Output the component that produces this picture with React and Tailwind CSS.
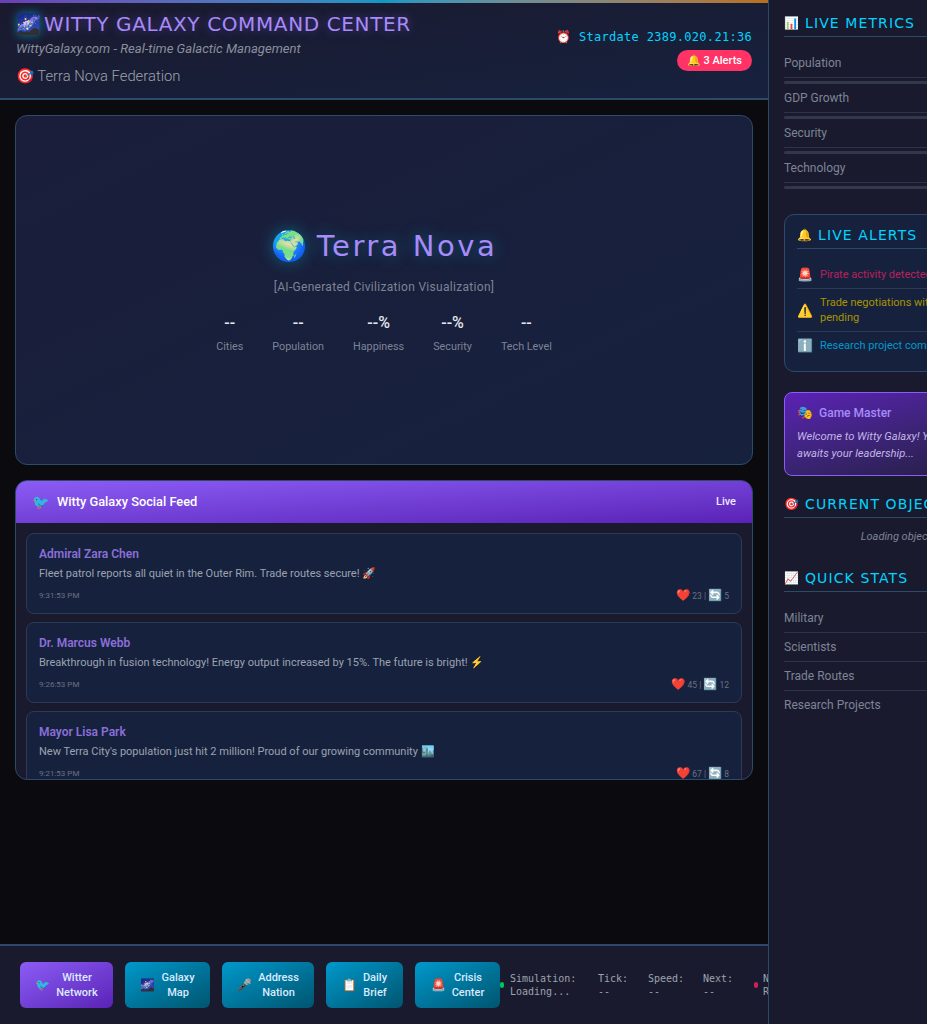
const display = "font-['DejaVu_Sans',sans-serif]";

const metrics = ['Population', 'GDP Growth', 'Security', 'Technology'];
const quickStats = ['Military', 'Scientists', 'Trade Routes', 'Research Projects'];
const heroStats = [
  ['--', 'Cities'],
  ['--', 'Population'],
  ['--%', 'Happiness'],
  ['--%', 'Security'],
  ['--', 'Tech Level'],
];
const posts = [
  { author: 'Admiral Zara Chen', text: 'Fleet patrol reports all quiet in the Outer Rim. Trade routes secure! 🚀', time: '9:31:53 PM', likes: 23, shares: 5 },
  { author: 'Dr. Marcus Webb', text: 'Breakthrough in fusion technology! Energy output increased by 15%. The future is bright! ⚡', time: '9:26:53 PM', likes: 45, shares: 12 },
  { author: 'Mayor Lisa Park', text: "New Terra City's population just hit 2 million! Proud of our growing community 🏙️", time: '9:21:53 PM', likes: 67, shares: 8 },
];
const actions = [
  { icon: '🐦', lines: ['Witter', 'Network'], width: 'w-[93px]', color: 'from-[#8b5cf6] to-[#5b21b6]' },
  { icon: '🌌', lines: ['Galaxy', 'Map'], width: 'w-[85px]', color: 'from-[#0099cc] to-[#005570]' },
  { icon: '🎤', lines: ['Address', 'Nation'], width: 'w-[92px]', color: 'from-[#0099cc] to-[#005570]' },
  { icon: '📋', lines: ['Daily', 'Brief'], width: 'w-[77px]', color: 'from-[#0099cc] to-[#005570]' },
  { icon: '🚨', lines: ['Crisis', 'Center'], width: 'w-[85px]', color: 'from-[#0099cc] to-[#005570]' },
];

function SectionTitle({ icon, children }) {
  return (
    <h3 className="flex h-[25px] items-center gap-[6px] border-b border-[#2d4a6b] pb-[3px] text-[14px] leading-none">
      <span className="text-[12px]">{icon}</span>
      <span className={`${display} tracking-[1.1px] whitespace-nowrap text-[#00d4ff]`}>{children}</span>
    </h3>
  );
}

function Post({ post }) {
  return (
    <div className="h-[81px] shrink-0 rounded-[8px] border border-[#2d3a55] bg-[#16213e] px-[12px] pt-[12px]">
      <div className="text-[12px] leading-[16px] font-semibold text-[#8b6fd8]">{post.author}</div>
      <div className="mt-[4px] text-[11px] leading-[16px] text-[#9ca3af]">{post.text}</div>
      <div className="mt-[7px] flex items-center justify-between text-[8px] leading-[12px] text-[#6b7280]">
        <span>{post.time}</span>
        <span className="text-[8.5px]"><span className="text-[11.5px]">❤️</span> {post.likes} | <span className="text-[11.5px]">🔄</span> {post.shares}</span>
      </div>
    </div>
  );
}

export default function App() {
  return (
    <div className="flex h-screen w-[927px] overflow-hidden bg-[#0a0a0f] font-['Roboto',sans-serif]">
      <div className="flex w-[768px] shrink-0 flex-col">
        <header className="h-[100px] shrink-0 border-b-2 border-[#2d4a6b] bg-gradient-to-br from-[#1a1a2e] to-[#16213e]">
          <div className="h-[3px] bg-gradient-to-r from-[#6b3fb5] via-[#0f97c4] to-[#b8701a]" />
          <div className="flex justify-between px-[16px]">
            <div>
              <h1 className="mt-[9px] flex items-center gap-[3px] text-[20px] leading-[24px]">
                <span className="[text-shadow:0_0_10px_rgba(0,212,255,0.5)]">🌌</span>
                <span className={`${display} tracking-[0.62px] whitespace-nowrap text-[#a78bfa] [text-shadow:0_0_10px_rgba(139,92,246,0.5)]`}>WITTY GALAXY COMMAND CENTER</span>
              </h1>
              <p className="mt-[4px] text-[13.1px] leading-[18px] text-[#8a8f9e] italic">WittyGalaxy.com - Real-time Galactic Management</p>
              <p className="mt-[8px] text-[14.8px] leading-[20px] font-light text-[#9ca3af]">🎯 Terra Nova Federation</p>
            </div>
            <div className="flex flex-col items-end">
              <div className="mt-[25px] font-['DejaVu_Sans_Mono',monospace] text-[12px] leading-[18px] tracking-[0.3px] text-[#00d4ff]">⏰ Stardate 2389.020.21:36</div>
              <div className="mt-[4px] rounded-full bg-[#ff3366] px-[10px] py-[3px] text-[11px] leading-[15px] font-medium text-white">🔔 3 Alerts</div>
            </div>
          </div>
        </header>

        <main className="flex flex-1 flex-col gap-[15px] px-[15px] pt-[15px]">
          <section className="flex h-[350px] shrink-0 flex-col items-center rounded-[12px] border border-[#2d4a6b] bg-gradient-to-br from-[#1a1e3a] to-[#16213e] pt-[112px]">
            <h2 className="flex items-center gap-[10px] text-[29px] leading-[36px] [text-shadow:0_0_16px_rgba(0,212,255,0.35)]">
              <span>🌍</span>
              <span className={`${display} tracking-[2.5px] text-[#a78bfa]`}>Terra Nova</span>
            </h2>
            <p className="mt-[14px] text-[12px] leading-[18px] tracking-[0.3px] text-[#7d8496]">[AI-Generated Civilization Visualization]</p>
            <div className="mt-[17px] flex gap-[29px]">
              {heroStats.map(([value, label]) => (
                <div key={label} className="flex flex-col items-center">
                  <span className="text-[16px] leading-[20px] font-medium text-[#e5e7eb]">{value}</span>
                  <span className="mt-[7px] text-[10.8px] leading-[14px] text-[#7d8496]">{label}</span>
                </div>
              ))}
            </div>
          </section>

          <section className="flex h-[300px] shrink-0 flex-col overflow-hidden rounded-[12px] border border-[#2d4a6b] bg-[#1a1a2e]">
            <div className="flex h-[42px] shrink-0 items-center justify-between bg-gradient-to-br from-[#8b5cf6] to-[#5b21b6] px-[16px]">
              <div className="flex items-center gap-[8px] text-[12.8px] font-medium text-white">
                <span className="text-[14px]">🐦</span>
                <span>Witty Galaxy Social Feed</span>
              </div>
              <span className="text-[11px] font-medium text-[#ede9fe]">Live</span>
            </div>
            <div className="flex flex-col gap-[8px] overflow-hidden px-[10px] pt-[10px]">
              {posts.map((post) => (
                <Post key={post.author} post={post} />
              ))}
            </div>
          </section>
        </main>

        <footer className="flex h-[80px] shrink-0 items-center overflow-hidden border-t-2 border-[#2d4a6b] bg-[#1a1a2e] pl-[20px]">
          <div className="flex shrink-0 gap-[12px]">
            {actions.map((action) => (
              <div key={action.icon} className={`flex h-[46px] shrink-0 items-center justify-center gap-[6px] rounded-[6px] bg-gradient-to-br ${action.width} ${action.color}`}>
                <span className="text-[12px]">{action.icon}</span>
                <span className="text-center text-[11px] leading-[15px] font-medium text-[#dbeafe]">
                  {action.lines[0]}<br />{action.lines[1]}
                </span>
              </div>
            ))}
          </div>
          <div className="flex shrink-0 items-center font-['DejaVu_Sans_Mono',monospace] text-[10px] leading-[13px] text-[#9ca3af]">
            <span className="h-[6px] w-[4px] shrink-0 rounded-full bg-[#00c060]" />
            <span className="ml-[6px] w-[88px]">Simulation:<br />Loading...</span>
            <span className="w-[50px]">Tick:<br />--</span>
            <span className="w-[55px]">Speed:<br />--</span>
            <span className="w-[51px]">Next:<br />--</span>
            <span className="h-[6px] w-[4px] shrink-0 rounded-full bg-[#d01f58]" />
            <span className="ml-[5px]">Neural<br />Relay</span>
          </div>
        </footer>
      </div>

      <aside className="w-[320px] shrink-0 border-l border-[#2d4a6b] bg-[#1a1a2e] px-[15px] pt-[12px]">
        <SectionTitle icon="📊">LIVE METRICS</SectionTitle>
        <div className="mt-[9px]">
          {metrics.map((metric) => (
            <div key={metric} className="h-[35px]">
              <div className="h-[32px] border-b border-[#2d3348] pt-[7px] text-[12px] leading-[20px] text-[#7d8496]">{metric}</div>
              <div className="mt-[3px] h-[3px] rounded-sm bg-[#33374a]" />
            </div>
          ))}
        </div>

        <section className="mt-[28px] h-[158px] rounded-[10px] border border-[#2d4a6b] bg-[#16213e] px-[12px] pt-[9px]">
          <SectionTitle icon="🔔">LIVE ALERTS</SectionTitle>
          <div className="mt-[10px] text-[11px] leading-[15px]">
            <div className="flex h-[30px] items-center gap-[7px] border-b border-[#2d3a55] pt-[2px] text-[#b8225a]"><span className="text-[13px]">🚨</span><span className="whitespace-nowrap">Pirate activity detected in Sector 7</span></div>
            <div className="flex h-[43px] items-center gap-[7px] border-b border-[#2d3a55] text-[#a89400]"><span className="text-[13px]">⚠️</span><span className="whitespace-nowrap">Trade negotiations with Vega Prime<br />pending</span></div>
            <div className="flex h-[26px] items-center gap-[7px] text-[#0099cc]"><span className="text-[13px]">ℹ️</span><span className="whitespace-nowrap">Research project completed</span></div>
          </div>
        </section>

        <section className="mt-[20px] h-[84px] rounded-[8px] border border-[#8b5cf6] bg-gradient-to-br from-[#5b21b6] to-[#1a1a2e] px-[12px] pt-[10px]">
          <div className="flex items-center gap-[6px] text-[12px] leading-[20px] font-medium text-[#a78bfa]">
            <span className="text-[13px]">🎭</span><span>Game Master</span>
          </div>
          <p className="mt-[5px] text-[11.2px] leading-[17px] whitespace-nowrap text-[#c4b5e8] italic">Welcome to Witty Galaxy! Your civilization<br />awaits your leadership...</p>
        </section>

        <div className="mt-[17px]"><SectionTitle icon="🎯">CURRENT OBJECTIVES</SectionTitle></div>
        <p className="mt-[10px] text-center text-[11px] leading-[18px] text-[#7d8496] italic">Loading objectives from AI...</p>

        <div className="mt-[21px]"><SectionTitle icon="📈">QUICK STATS</SectionTitle></div>
        <div className="mt-[12px]">
          {quickStats.map((stat, i) => (
            <div key={stat} className={`h-[29px] pt-[4px] text-[12px] leading-[20px] text-[#7d8496] ${i < 3 ? 'border-b border-[#2d3348]' : ''}`}>{stat}</div>
          ))}
        </div>
      </aside>
    </div>
  );
}
